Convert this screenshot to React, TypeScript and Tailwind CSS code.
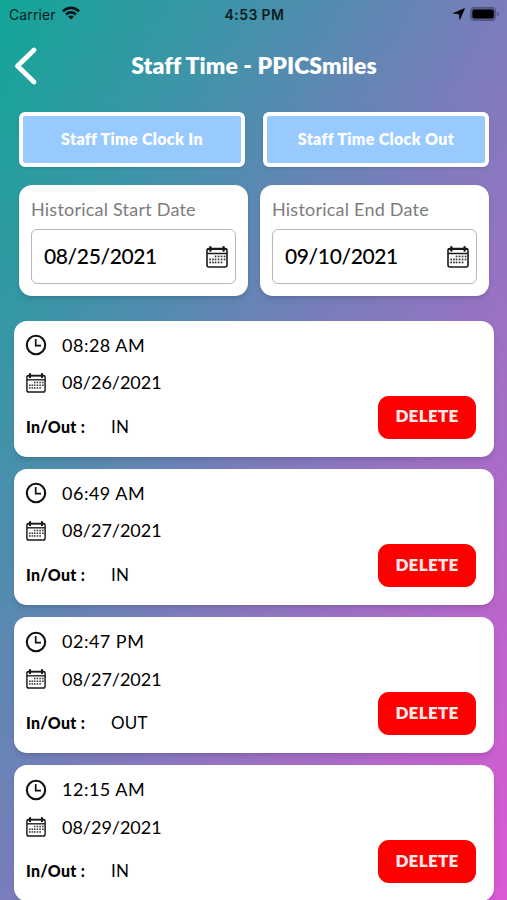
const entries = [
  { time: "08:28 AM", date: "08/26/2021", status: "IN" },
  { time: "06:49 AM", date: "08/27/2021", status: "IN" },
  { time: "02:47 PM", date: "08/27/2021", status: "OUT" },
  { time: "12:15 AM", date: "08/29/2021", status: "IN" },
];

const dots = [
  [9, 10], [12, 10], [15, 10], [18, 10],
  [6.4, 13], [9, 13], [12, 13], [15, 13], [18, 13],
  [3.6, 13],
  [3.6, 16], [6.4, 16], [9, 16], [12, 16], [15, 16],
];

function CalendarIcon({ className }: { className: string }) {
  return (
    <svg viewBox="0 0 22 22" className={className} fill="none" stroke="#1a1a1a">
      <rect x="1" y="2.6" width="20" height="18.4" rx="2" strokeWidth="1.6" />
      <path d="M1 3.2H21" strokeWidth="1.6" />
      <path d="M1 7.5H21" strokeWidth="1.5" />
      <path d="M4.4 1.2V4.6M17.6 1.2V4.6" strokeWidth="2.4" strokeLinecap="round" />
      {dots.map(([x, y]) => (
        <rect key={`${x}-${y}`} x={x - 0.3} y={y - 0.4} width="1.7" height="1.7" fill="#333" stroke="none" />
      ))}
    </svg>
  );
}

function ClockIcon() {
  return (
    <svg viewBox="0 0 22 22" className="-ml-px size-[22px]" fill="none" stroke="#111">
      <circle cx="11" cy="11" r="9.2" strokeWidth="2.1" />
      <path d="M10.7 5V11.6H16" strokeWidth="1.7" />
    </svg>
  );
}

function StatusBar() {
  return (
    <div className="grid h-7 grid-cols-3 items-center pr-[7px] pl-[9px] font-['Inter'] text-[14px] text-[#0b1c20]">
      <div className="flex items-center gap-[6px]">
        <span className="tracking-[0.1px]">Carrier</span>
        <svg viewBox="0 0 18 14" className="mb-[3px] h-[14px] w-[18px]" fill="#071417">
          <path d="M0 4.4C5-.9 13-.9 18 4.4L16.1 6.3C12.2 2.3 5.8 2.3 1.9 6.3Z" />
          <path d="M3.1 7.5C6.4 4.2 11.6 4.2 14.9 7.5L13 9.4C10.8 7.3 7.2 7.3 5 9.4Z" />
          <path d="M6.1 10.6C7.7 9.1 10.3 9.1 11.9 10.6L9 13.5Z" />
        </svg>
      </div>
      <span className="text-center text-[14px] font-semibold tracking-[0.4px]">4:53 PM</span>
      <div className="flex items-center justify-end gap-[5px]">
        <svg viewBox="0 0 12 12" className="size-3" fill="#000">
          <path d="M11.6.4 6.8 11.6 6.1 5.9.5 5.3Z" stroke="#000" strokeWidth=".6" strokeLinejoin="round" />
        </svg>
        <svg viewBox="0 0 30 14" className="h-[14px] w-[30px]">
          <rect x=".7" y=".7" width="24.8" height="12.6" rx="3.6" fill="#5a5f92" stroke="#50557f" strokeWidth="1.2" />
          <rect x="2.4" y="2.4" width="21.4" height="9.2" rx="2" fill="#000" />
          <path d="M27.2 4.8C29.6 5.6 29.6 8.4 27.2 9.2Z" fill="#50557f" />
        </svg>
      </div>
    </div>
  );
}

function ClockButton({ label }: { label: string }) {
  return (
    <button className="flex h-[55px] w-[226px] items-center justify-center rounded-[6px] border-4 border-white bg-[#99caff] pb-[2px] text-[16px] font-extrabold tracking-[0.33px] text-white shadow-sm">
      {label}
    </button>
  );
}

function DateField({ label, value }: { label: string; value: string }) {
  return (
    <div className="h-[111px] w-[229px] rounded-[13px] bg-white px-3 pt-3 shadow-md">
      <div className="h-8 text-[18px] leading-6 tracking-[0.22px] text-[#7c7c7c]">{label}</div>
      <div className="flex h-[55px] w-[205px] items-center justify-between rounded-[6px] border border-[#b8b8b8] pr-[7px] pl-3">
        <span className="pb-[2px] text-[21px] font-medium tracking-[-0.37px] text-black">{value}</span>
        <CalendarIcon className="size-[22px]" />
      </div>
    </div>
  );
}

function EntryCard({ time, date, status }: { time: string; date: string; status: string }) {
  return (
    <div className="flex h-[136px] shrink-0 items-start justify-between rounded-[13px] bg-white pr-[18px] pl-3 shadow-md">
      <div className="text-black">
        <div className="mt-[12.6px] flex h-6 items-center">
          <div className="w-9"><ClockIcon /></div>
          <span className="text-[18px] tracking-[0.5px]">{time}</span>
        </div>
        <div className="mt-[13.4px] flex h-6 items-center">
          <div className="w-9"><CalendarIcon className="size-5" /></div>
          <span className="text-[18px] tracking-[-0.02px]">{date}</span>
        </div>
        <div className="mt-5 flex h-6 items-center">
          <span className="w-[85px] text-[16px] font-black tracking-[0.25px]">In/Out :</span>
          <span className="text-[17px] tracking-[0.2px]">{status}</span>
        </div>
      </div>
      <button className="mt-[75px] h-[43px] w-[98px] rounded-[11px] bg-[#ff0000] pb-[2px] text-[17px] font-extrabold tracking-[0.3px] text-[#ffeaea]">
        DELETE
      </button>
    </div>
  );
}

export default function App() {
  return (
    <div className="h-[900px] w-full overflow-hidden bg-[linear-gradient(to_bottom_right,#11a697_0%,#4292aa_25%,#7a7dbb_50%,#aa6cc8_75%,#dc58d6_100%)] font-['Lato','Liberation_Sans',sans-serif]">
      <StatusBar />
      <header className="grid h-[76px] grid-cols-[60px_1fr_60px] items-center">
        <svg viewBox="0 0 24 40" className="ml-[14px] h-10 w-6" fill="none" stroke="#fff" strokeWidth="4.8" strokeLinecap="round" strokeLinejoin="round">
          <path d="M20 4 3.5 20 20 36" />
        </svg>
        <h1 className="pb-[2px] pl-px text-center text-[23px] font-extrabold tracking-[0.1px] text-white">Staff Time - PPICSmiles</h1>
      </header>
      <div className="mt-2 flex gap-[18px] pl-[19px]">
        <ClockButton label="Staff Time Clock In" />
        <ClockButton label="Staff Time Clock Out" />
      </div>
      <div className="mt-[18px] flex gap-3 pl-[19px]">
        <DateField label="Historical Start Date" value="08/25/2021" />
        <DateField label="Historical End Date" value="09/10/2021" />
      </div>
      <main className="mt-[24.7px] flex flex-col gap-[12.2px] pr-[13px] pl-[14px]">
        {entries.map((entry) => (
          <EntryCard key={entry.time} {...entry} />
        ))}
      </main>
    </div>
  );
}
